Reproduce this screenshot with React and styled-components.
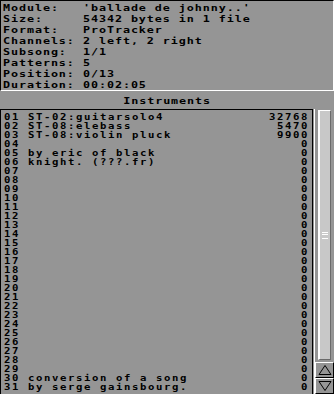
import React from 'react'
import styled, { createGlobalStyle } from 'styled-components'

// the screen font is a wide 8px-cell bitmap font; a mono face stretched 1.25x stands in for it
const STRETCH = 1.25

const GlobalStyle = createGlobalStyle`
  html, body {
    margin: 0;
    padding: 0;
    background: #959595;
  }
`

const Window = styled.div`
  width: 334px;
  height: 394px;
  display: flex;
  flex-direction: column;
  background: #959595;
  color: #000;
  font-family: "DejaVu Sans Mono", "Liberation Mono", monospace;
  font-weight: bold;
  overflow: hidden;
`

const Stretch = styled.div`
  width: ${100 / STRETCH}%;
  transform: scaleX(${STRETCH});
  transform-origin: 0 0;
`

const InfoPanel = styled.div`
  box-sizing: border-box;
  height: 91px;
  padding: 1px 2px 0;
  border-top: 1px solid #000;
  border-left: 1px solid #000;
  border-bottom: 1px solid #fff;
  border-right: 1px solid #fff;
`

const InfoGrid = styled(Stretch)`
  display: grid;
  grid-template-columns: ${80 / STRETCH}px 1fr;
  grid-auto-rows: 11px;
  font-size: 9.4px;
  line-height: 11px;
  letter-spacing: ${8 / STRETCH - 9.4 * 0.602}px;
  white-space: pre;
`

const Label = styled.div``

const Value = styled.div``

const Header = styled.div`
  height: 18px;
  display: flex;
  justify-content: center;
  align-items: center;
`

const HeaderText = styled.div`
  font-size: 9.4px;
  line-height: 11px;
  letter-spacing: ${8 / STRETCH - 9.4 * 0.602}px;
  transform: scaleX(${STRETCH});
`

const ListArea = styled.div`
  flex: 1;
  display: flex;
  min-height: 0;
`

const List = styled.div`
  flex: 1;
  box-sizing: border-box;
  border-top: 1px solid #000;
  border-left: 1px solid #000;
  border-right: 1px solid #000;
  padding: 3px 3px 0 3px;
`

const ListRows = styled(Stretch)`
  font-size: 8.5px;
  letter-spacing: ${8 / STRETCH - 8.5 * 0.602}px;
`

const Row = styled.div`
  display: flex;
  height: 9px;
  line-height: 9px;
  white-space: pre;
`

const Num = styled.span`
  width: ${24 / STRETCH}px;
`

const Name = styled.span`
  flex: 1;
`

const Size = styled.span`
  text-align: right;
`

const ScrollColumn = styled.div`
  width: 20px;
  box-sizing: border-box;
  border-left: 1px solid #fff;
  margin-left: 1px;
  display: flex;
  flex-direction: column;
`

const Track = styled.div`
  flex: 1;
  padding: 1px 3px 2px 3px;
  display: flex;
`

const Thumb = styled.div`
  flex: 1;
  box-sizing: border-box;
  background: #c8c8c8;
  border-top: 1px solid #fff;
  border-left: 2px solid #fff;
  border-right: 1px solid #6a6a6a;
  border-bottom: 1px solid #6a6a6a;
  display: flex;
  align-items: center;
  justify-content: center;
`

const Grip = styled.div`
  width: 6px;
  height: 5px;
  border-top: 1px solid #fff;
  border-bottom: 1px solid #fff;
  position: relative;
  &::after {
    content: '';
    position: absolute;
    left: 0;
    right: 0;
    top: 1px;
    border-top: 1px solid #fff;
  }
`

const ArrowButton = styled.div`
  height: 16px;
  box-sizing: border-box;
  border-top: 1px solid #fff;
  border-left: 1px solid #fff;
  border-right: 1px solid #000;
  border-bottom: 1px solid #000;
  display: flex;
  align-items: center;
  justify-content: center;
`

const info = [
  ['Module:', "'ballade de johnny..'"],
  ['Size:', '54342 bytes in 1 file'],
  ['Format:', 'ProTracker'],
  ['Channels:', '2 left, 2 right'],
  ['Subsong:', '1/1'],
  ['Patterns:', '5'],
  ['Position:', '0/13'],
  ['Duration:', '00:02:05'],
]

const named = {
  1: ['ST-02:guitarsolo4', 32768],
  2: ['ST-08:elebass', 5470],
  3: ['ST-08:violin pluck', 9900],
  5: ['by eric of black', 0],
  6: ['knight. (???.fr)', 0],
  30: ['conversion of a song', 0],
  31: ['by serge gainsbourg.', 0],
}

const instruments = Array.from({ length: 31 }, (_, i) => {
  const n = i + 1
  const [name, size] = named[n] || ['', 0]
  return { n: String(n).padStart(2, '0'), name, size }
})

const Arrow = ({ down }) => (
  <svg width="14" height="12" viewBox="0 0 14 12">
    <path
      d={down ? 'M1 1.5 H13 L7 10.5 Z' : 'M7 1.5 L13 10.5 H1 Z'}
      fill="none"
      stroke="#000"
      strokeWidth="1"
    />
  </svg>
)

export default function App() {
  return (
    <Window>
      <GlobalStyle />
      <InfoPanel>
        <InfoGrid>
          {info.map(([label, value]) => (
            <React.Fragment key={label}>
              <Label>{label}</Label>
              <Value>{value}</Value>
            </React.Fragment>
          ))}
        </InfoGrid>
      </InfoPanel>
      <Header>
        <HeaderText>Instruments</HeaderText>
      </Header>
      <ListArea>
        <List>
          <ListRows>
            {instruments.map(item => (
              <Row key={item.n}>
                <Num>{item.n}</Num>
                <Name>{item.name}</Name>
                <Size>{item.size}</Size>
              </Row>
            ))}
          </ListRows>
        </List>
        <ScrollColumn>
          <Track>
            <Thumb>
              <Grip />
            </Thumb>
          </Track>
          <ArrowButton>
            <Arrow />
          </ArrowButton>
          <ArrowButton>
            <Arrow down />
          </ArrowButton>
        </ScrollColumn>
      </ListArea>
    </Window>
  )
}
